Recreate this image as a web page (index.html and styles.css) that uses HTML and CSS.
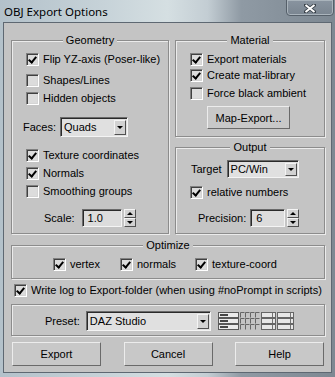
FILE: index.html
```html
<!DOCTYPE html>
<html lang="en">
<head>
    <meta charset="UTF-8">
    <title>OBJ Export Options</title>
    <link rel="stylesheet" href="styles.css">
</head>
<body>
<div class="window">
    <div class="titlebar">
        <span class="title">OBJ Export Options</span>
        <div class="close">
            <svg width="12" height="9" viewBox="0 0 12 9">
                <path d="M1.5 1 L10.5 8 M10.5 1 L1.5 8" stroke="#3a424a" stroke-width="3.6" stroke-linecap="round"/>
                <path d="M1.5 1 L10.5 8 M10.5 1 L1.5 8" stroke="#fff" stroke-width="2"/>
            </svg>
        </div>
    </div>
    <div class="client">
        <div class="top">
            <fieldset class="group geometry">
                <legend>Geometry</legend>
                <label class="check flip"><span class="box on"></span>Flip YZ-axis (Poser-like)</label>
                <label class="check shapes"><span class="box"></span>Shapes/Lines</label>
                <label class="check"><span class="box"></span>Hidden objects</label>
                <div class="row faces">
                    <span>Faces:</span>
                    <div class="combo faces-combo"><span class="val">Quads</span><span class="arrow"></span></div>
                </div>
                <label class="check texcoords"><span class="box on"></span>Texture coordinates</label>
                <label class="check"><span class="box on"></span>Normals</label>
                <label class="check"><span class="box"></span>Smoothing groups</label>
                <div class="row scale">
                    <span>Scale:</span>
                    <div class="spin">
                        <div class="field">1.0</div>
                        <div class="arrows"><span class="up"></span><span class="down"></span></div>
                    </div>
                </div>
            </fieldset>
            <div class="side">
                <fieldset class="group material">
                    <legend>Material</legend>
                    <label class="check tight first"><span class="box on"></span>Export materials</label>
                    <label class="check tight"><span class="box on"></span>Create mat-library</label>
                    <label class="check force"><span class="box"></span>Force black ambient</label>
                    <div class="btn map-export">Map-Export...</div>
                </fieldset>
                <fieldset class="group output">
                    <legend>Output</legend>
                    <div class="row target">
                        <span>Target</span>
                        <div class="combo target-combo"><span class="val">PC/Win</span><span class="arrow"></span></div>
                    </div>
                    <label class="check relative"><span class="box on"></span>relative numbers</label>
                    <div class="row precision">
                        <span>Precision:</span>
                        <div class="spin">
                            <div class="field small">6</div>
                            <div class="arrows"><span class="up"></span><span class="down"></span></div>
                        </div>
                    </div>
                </fieldset>
            </div>
        </div>
        <fieldset class="group optimize">
            <legend>Optimize</legend>
            <div class="opt-row">
                <label class="check opt-vertex"><span class="box on"></span>vertex</label>
                <label class="check opt-normals"><span class="box on"></span>normals</label>
                <label class="check"><span class="box on"></span>texture-coord</label>
            </div>
        </fieldset>
        <label class="check log"><span class="box on"></span>Write log to Export-folder (when using #noPrompt in scripts)</label>
        <div class="group preset">
            <span class="preset-label">Preset:</span>
            <div class="combo preset-combo"><span class="val">DAZ Studio</span><span class="arrow"></span></div>
            <svg class="preset-icon" width="79" height="18" viewBox="0 0 79 18">
                <g id="prow">
                    <rect x="0.5" y="0.5" width="20" height="5" fill="#ececec" stroke="#5a5a5a"/>
                    <path d="M2 3 H10" stroke="#000" stroke-width="1.4"/>
                    <path d="M22.5 5.5 V0.5 H26.5 M27.5 5.5 V0.5 H31.5 M32.5 5.5 V0.5 H36.5 M37.5 5.5 V0.5 H41.5" stroke="#666" fill="none"/>
                    <rect x="43.5" y="0.5" width="14" height="5" fill="#e8e8e8" stroke="#666"/>
                    <path d="M54.5 1.5 V2.5 M54.5 3.5 V4.5" stroke="#000"/>
                    <rect x="59.5" y="0.5" width="16" height="5" fill="#e8e8e8" stroke="#666"/>
                    <path d="M72.5 1.5 V2.5 M72.5 3.5 V4.5" stroke="#000"/>
                </g>
                <use href="#prow" y="6"/>
                <use href="#prow" y="12"/>
            </svg>
        </div>
        <div class="buttons">
            <div class="btn">Export</div>
            <div class="btn">Cancel</div>
            <div class="btn">Help</div>
        </div>
    </div>
</div>
</body>
</html>
```

FILE: styles.css
```css
body {
    margin: 0;
    font-family: "Liberation Sans", Arial, sans-serif;
    font-size: 11px;
    color: #000;
}
.window {
    width: 335px;
    height: 377px;
    box-sizing: border-box;
    padding: 0 3px 4px 3px;
    display: flex;
    flex-direction: column;
    background: linear-gradient(90deg, #b3c1ca 0%, #c6d2d8 30%, #d5dfe2 50%, #c3cdd3 62%, #8f9aa4 72%, #7d8892 100%);
}
.titlebar {
    height: 22px;
    flex: none;
    position: relative;
    display: flex;
    align-items: center;
}
.title {
    font-family: "Noto Sans", sans-serif;
    font-size: 11.5px;
    padding-left: 1px;
    color: #000;
}
.close {
    position: absolute;
    top: -1px;
    right: -2px;
    width: 48px;
    height: 17px;
    box-sizing: border-box;
    border: 1px solid #56606a;
    border-radius: 0 0 4px 4px;
    box-shadow: inset 0 0 0 1px #aab4bc;
    background: linear-gradient(#8994a0, #7a8590);
    display: flex;
    align-items: center;
    justify-content: center;
}
.close svg {
    margin-top: 1px;
}
.client {
    flex: 1;
    background: #c4c4c4;
    border: 1px solid #5e6872;
    padding: 10px 6px 0 7px;
    display: flex;
    flex-direction: column;
}

/* group boxes */
.group {
    margin: 0;
    padding: 0;
    min-width: 0;
    border: 1px solid #8c8c8c;
    box-shadow: inset 1px 1px 0 #ebebeb, 1px 1px 0 #ebebeb;
}
.group legend {
    margin: 0 auto;
    padding: 0 3px;
    height: 14px;
    line-height: 14px;
    background: #c4c4c4;
}
.top {
    display: flex;
    gap: 6px;
}
.geometry {
    width: 158px;
    box-sizing: border-box;
    padding: 0 0 6px 0;
}
.side {
    width: 150px;
    display: flex;
    flex-direction: column;
    gap: 3px;
}
.material {
    padding: 0 0 7px 0;
}
.output {
    flex: 1;
    padding: 0 0 6px 0;
}

/* checkboxes */
.check {
    display: flex;
    align-items: center;
    height: 18px;
    white-space: nowrap;
}
.box {
    position: relative;
    flex: none;
    width: 13px;
    height: 13px;
    box-sizing: border-box;
    margin-right: 4px;
    border: 1px solid;
    border-color: #808080 #ffffff #ffffff #808080;
    box-shadow: inset 1px 1px 0 #404040, inset -1px -1px 0 #d4d4d4;
    background: #dcdcdc;
}
.box.on::after {
    content: "";
    position: absolute;
    left: 3px;
    top: 1px;
    width: 3px;
    height: 6px;
    border: solid #000;
    border-width: 0 2px 2px 0;
    transform: rotate(40deg);
}
.geometry .check,
.material .check,
.output .check {
    margin-left: 14px;
}
.geometry .flip {
    margin-top: 3px;
}
.geometry .shapes {
    margin-top: 3px;
}
.geometry .texcoords {
    margin-top: 9px;
}
.material .tight {
    height: 16px;
}
.material .first {
    margin-top: 4px;
}
.material .force {
    margin-top: 1px;
}

/* rows with label + control */
.row {
    display: flex;
    align-items: center;
}
.faces {
    margin: 10px 0 0 11px;
    height: 20px;
    gap: 4px;
}
.scale {
    margin: 9px 0 0 32px;
    height: 18px;
    gap: 7px;
}
.target {
    margin: 6px 0 0 15px;
    height: 18px;
    gap: 5px;
}
.output .relative {
    margin-top: 5px;
}
.precision {
    margin: 8px 0 0 22px;
    height: 18px;
    gap: 4px;
}

/* combo boxes */
.combo {
    display: flex;
    align-items: center;
    box-sizing: border-box;
    height: 20px;
    padding: 0 1px 0 3px;
    border: 1px solid;
    border-color: #6a6a6a #f4f4f4 #f4f4f4 #6a6a6a;
    box-shadow: inset 1px 1px 0 #2a2a2a;
    background: #e0e0e0;
}
.combo .val {
    flex: 1;
}
.combo .arrow {
    width: 12px;
    height: 15px;
    box-sizing: border-box;
    border: 1px solid;
    border-color: #f4f4f4 #505050 #505050 #f4f4f4;
    background: #d2d2d2;
    display: flex;
    align-items: center;
    justify-content: center;
}
.combo .arrow::after {
    content: "";
    border-left: 3px solid transparent;
    border-right: 3px solid transparent;
    border-top: 3px solid #000;
}
.faces-combo {
    width: 68px;
}
.target-combo {
    width: 72px;
    height: 18px;
}
.target-combo .arrow {
    height: 13px;
}

/* spinners */
.spin {
    display: flex;
    align-items: center;
    gap: 2px;
}
.field {
    width: 40px;
    height: 18px;
    box-sizing: border-box;
    padding-left: 5px;
    line-height: 16px;
    border: 1px solid;
    border-color: #6a6a6a #f4f4f4 #f4f4f4 #6a6a6a;
    box-shadow: inset 1px 1px 0 #2a2a2a;
    background: #dcdcdc;
}
.field.small {
    width: 35px;
}
.arrows {
    display: flex;
    flex-direction: column;
    width: 12px;
    height: 18px;
}
.arrows span {
    flex: 1;
    box-sizing: border-box;
    border: 1px solid;
    border-color: #f4f4f4 #505050 #505050 #f4f4f4;
    background: #d2d2d2;
    display: flex;
    align-items: center;
    justify-content: center;
}
.arrows .up::after {
    content: "";
    border-left: 3px solid transparent;
    border-right: 3px solid transparent;
    border-bottom: 3px solid #000;
}
.arrows .down::after {
    content: "";
    border-left: 3px solid transparent;
    border-right: 3px solid transparent;
    border-top: 3px solid #000;
}

/* buttons */
.btn {
    display: flex;
    align-items: center;
    justify-content: center;
    box-sizing: border-box;
    height: 24px;
    border: 1px solid;
    border-color: #ececec #6a6a6a #6a6a6a #ececec;
    background: #c8c8c8;
}
.map-export {
    width: 83px;
    height: 23px;
    margin: 4px 0 0 31px;
}

/* optimize */
.optimize {
    margin-top: 4px;
    padding: 0 0 5px 0;
}
.opt-row {
    display: flex;
    margin: 3px 0 0 41px;
}
.opt-vertex {
    width: 67px;
}
.opt-normals {
    width: 75px;
}
.log {
    margin: 2px 0 0 3px;
}

/* preset */
.preset {
    margin-top: 5px;
    padding: 6px 0 4px 0;
    display: flex;
    align-items: center;
}
.preset-label {
    margin-left: 33px;
    margin-right: 6px;
}
.preset-combo {
    width: 125px;
}
.preset-icon {
    margin-left: 7px;
}
.buttons {
    margin-top: 6px;
    padding: 0 1px;
    display: flex;
    justify-content: space-between;
}
.buttons .btn {
    width: 89px;
}
```
